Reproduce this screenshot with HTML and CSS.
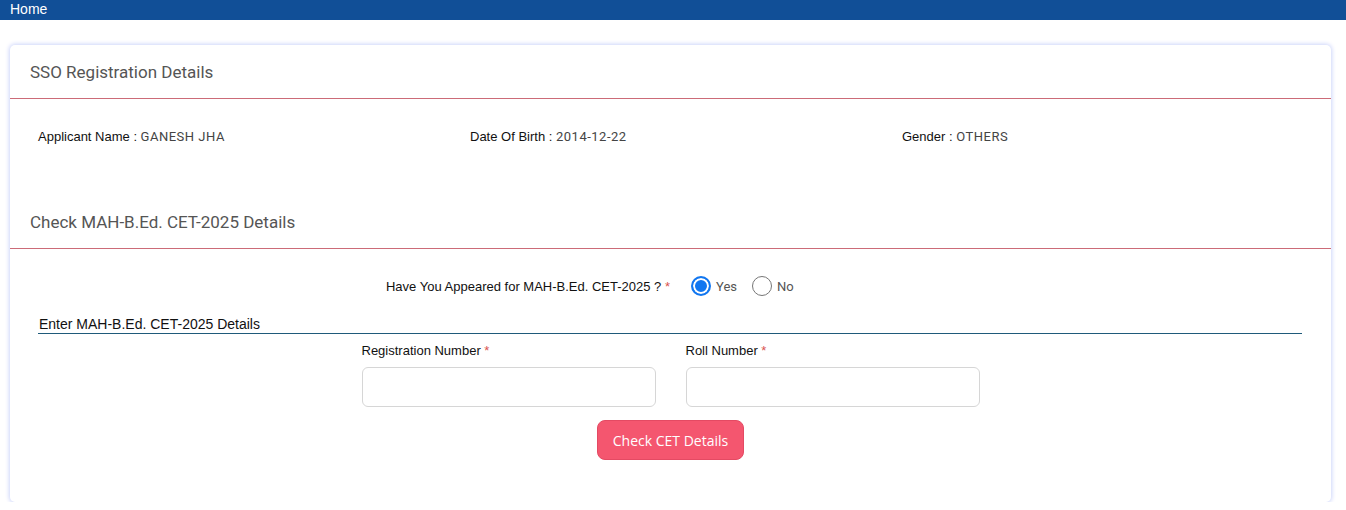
FILE: index.html
```html
<!DOCTYPE html>
<html lang="en">
<head>
    <meta charset="UTF-8">
    <meta name="viewport" content="width=device-width, initial-scale=1.0">
    <title>SSO Registration Details</title>
    <link rel="stylesheet" href="styles.css">
</head>
<body>
    <div class="topbar">Home</div>

    <div class="card">
        <div class="card-header">SSO Registration Details</div>
        <div class="info-body">
            <div class="info-item">Applicant Name : <span class="value">GANESH JHA</span></div>
            <div class="info-item">Date Of Birth : <span class="value">2014-12-22</span></div>
            <div class="info-item">Gender : <span class="value">OTHERS</span></div>
        </div>

        <div class="card-header">Check MAH-B.Ed. CET-2025 Details</div>
        <div class="form-body">
            <div class="radio-row">
                <div class="radio-question">Have You Appeared for MAH-B.Ed. CET-2025 ? <span class="req">*</span></div>
                <div class="radio-options">
                    <label class="radio"><input type="radio" name="appeared" checked> Yes</label>
                    <label class="radio"><input type="radio" name="appeared"> No</label>
                </div>
            </div>

            <div class="sub-title">Enter MAH-B.Ed. CET-2025 Details</div>

            <div class="field-row">
                <div class="field">
                    <label>Registration Number <span class="req">*</span></label>
                    <input type="text">
                </div>
                <div class="field">
                    <label>Roll Number <span class="req">*</span></label>
                    <input type="text">
                </div>
            </div>

            <div class="btn-row">
                <button class="btn-check">Check CET Details</button>
            </div>
        </div>
    </div>
</body>
</html>
```

FILE: styles.css
```css
body {
    margin: 0;
    font-family: "Liberation Sans", Arial, sans-serif;
    font-size: 13px;
    color: #111;
    background: #fff;
}
.topbar {
    background-color: #114f97;
    color: #fff;
    height: 20px;
    line-height: 19px;
    padding-left: 10px;
    font-size: 14px;
}
.card {
    margin: 25px 15px 0 10px;
    border-radius: 5px;
    box-shadow: 0 0 4px 1px #cdd5fa;
    background: #fff;
    padding-bottom: 42px;
}
.card-header {
    height: 53px;
    line-height: 54px;
    padding-left: 20px;
    border-bottom: 1px solid #cc6b78;
    font-family: Roboto, "Liberation Sans", sans-serif;
    font-size: 17px;
    font-weight: 400;
    color: #555;
}
.info-body {
    display: grid;
    grid-template-columns: repeat(3, 432px);
    padding: 30px 0 50px 28px;
    line-height: 16px;
}
.info-item .value {
    font-family: Roboto, "Liberation Sans", sans-serif;
    color: #444;
    letter-spacing: 0.5px;
}
.req {
    color: #d9534f;
}
.form-body {
    padding-top: 27px;
}
.radio-row {
    display: flex;
    align-items: center;
    height: 20px;
}
.radio-question {
    width: 660px;
    text-align: right;
}
.radio-options {
    display: flex;
    align-items: center;
    padding-left: 21px;
    gap: 15px;
    font-family: Roboto, "Liberation Sans", sans-serif;
    color: #555;
}
.radio {
    display: flex;
    align-items: center;
    gap: 5px;
}
.radio input {
    appearance: none;
    margin: 0;
    width: 20px;
    height: 20px;
    border-radius: 50%;
    border: 1px solid #767676;
    box-sizing: border-box;
}
.radio input:checked {
    border: 2px solid #1277f0;
    background: #1277f0;
    box-shadow: inset 0 0 0 2px #fff;
}
.sub-title {
    margin: 12px 29px 0 28px;
    padding: 8px 0 1px 1px;
    border-bottom: 1px solid #1f5a7a;
    font-size: 14px;
    line-height: 16px;
}
.field-row {
    display: flex;
    justify-content: center;
    gap: 30px;
    margin-top: 9px;
}
.field {
    display: flex;
    flex-direction: column;
    width: 294px;
}
.field label {
    line-height: 16px;
    margin-bottom: 8px;
}
.field input {
    height: 40px;
    box-sizing: border-box;
    border: 1px solid #d6d6d6;
    border-radius: 6px;
    padding: 0 10px;
}
.btn-row {
    display: flex;
    justify-content: center;
    margin-top: 13px;
}
.btn-check {
    width: 147px;
    height: 40px;
    background-color: #f4566f;
    color: #fff;
    border: 1px solid #e44a63;
    border-radius: 8px;
    font-family: "Open Sans", sans-serif;
    font-size: 14px;
    cursor: pointer;
}
```
